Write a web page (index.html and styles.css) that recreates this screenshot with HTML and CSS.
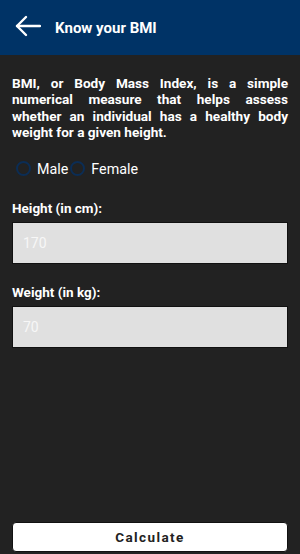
FILE: index.html
```html
<!DOCTYPE html>
<html lang="en">
<head>
  <meta charset="UTF-8" />
  <meta name="viewport" content="width=device-width, initial-scale=1.0" />
  <title>Know your BMI</title>
  <link rel="stylesheet" href="styles.css">
</head>
<body>

<header class="app-bar">
  <button class="back" type="button" aria-label="Back">
    <svg width="26" height="22" viewBox="0 0 26 22" fill="none" stroke="#fff" stroke-width="2.4" stroke-linecap="round" stroke-linejoin="round">
      <path d="M2 11 H25" />
      <path d="M11 2 L2 11 L11 20" />
    </svg>
  </button>
  <h1>Know your BMI</h1>
</header>

<main class="content">
  <p class="intro">
    BMI, or Body Mass Index, is a simple numerical measure that helps assess whether an individual has a healthy body weight for a given height.
  </p>

  <div class="gender">
    <label class="radio"><input type="radio" name="gender" /><span class="dot"></span>Male</label>
    <label class="radio"><input type="radio" name="gender" /><span class="dot"></span>Female</label>
  </div>

  <label class="field-label" for="height">Height (in cm):</label>
  <input class="field" id="height" type="text" placeholder="170" />

  <label class="field-label" for="weight">Weight (in kg):</label>
  <input class="field" id="weight" type="text" placeholder="70" />

  <div class="spacer"></div>

  <button class="calc" type="button">Calculate</button>
</main>

</body>
</html>
```

FILE: styles.css
```css
* {
  box-sizing: border-box;
}

html, body {
  height: 100%;
}

body {
  margin: 0;
  font-family: Roboto, "Liberation Sans", Arial, sans-serif;
  background-color: #222222;
  color: #fff;
  display: flex;
  flex-direction: column;
}

.app-bar {
  height: 55px;
  background-color: #003366;
  display: flex;
  align-items: center;
  padding: 0 14px 0 15px;
  flex-shrink: 0;
}

.back {
  background: none;
  border: none;
  padding: 0;
  margin-right: 14px;
  display: flex;
  align-items: center;
  margin-top: -4px;
}

.app-bar h1 {
  margin: 0;
  font-size: 15px;
  font-weight: 700;
  color: #fff;
  margin-top: 1px;
}

.content {
  flex: 1;
  display: flex;
  flex-direction: column;
  padding: 20px 12px 2px;
}

.intro {
  margin: 0;
  font-size: 13.6px;
  font-weight: 700;
  line-height: 16.4px;
  text-align: justify;
}

.gender {
  display: flex;
  align-items: center;
  margin-top: 20px;
  margin-left: 4px;
  font-size: 14.3px;
}

.radio {
  display: flex;
  align-items: center;
  margin-right: 2px;
}

.radio input {
  display: none;
}

.dot {
  width: 15px;
  height: 15px;
  border: 2px solid #0b2d55;
  border-radius: 50%;
  margin-right: 6px;
}

.field-label {
  font-size: 13.5px;
  font-weight: 700;
  margin-top: 23px;
  margin-bottom: 6px;
}

.field-label + .field + .field-label {
  margin-top: 0;
}

.field {
  width: 100%;
  height: 42px;
  background-color: #e0e0e0;
  border: 1px solid #111;
  border-radius: 0;
  padding: 0 10px;
  font-family: inherit;
  font-size: 14px;
  margin-bottom: 20px;
}

.field::placeholder {
  color: #f7f7f7;
}

.spacer {
  flex: 1;
}

.calc {
  height: 30px;
  background-color: #fff;
  border: 1px solid #111;
  border-radius: 4px;
  font-family: inherit;
  font-size: 13.5px;
  font-weight: 700;
  letter-spacing: 1.4px;
  color: #222;
}
```
